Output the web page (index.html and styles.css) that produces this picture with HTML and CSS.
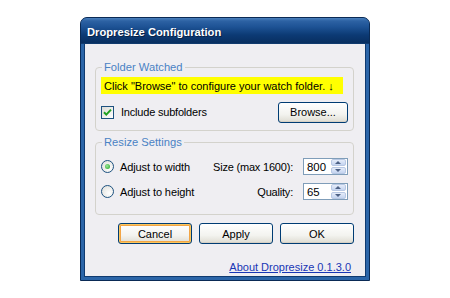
FILE: index.html
```html
<!DOCTYPE html>
<html>
<head>
<meta charset="utf-8">
<link rel="stylesheet" href="styles.css">
</head>
<body>
<div class="window">
  <div class="titlebar">Dropresize Configuration</div>
  <div class="client">
    <fieldset class="group g1">
      <legend>Folder Watched</legend>
      <div class="notice">Click "Browse" to configure your watch folder. ↓</div>
      <div class="row row-check">
        <span class="check"><svg width="9" height="9" viewBox="0 0 9 9"><path d="M1 4.2 L3.3 6.6 L8 1.6" fill="none" stroke="#21a121" stroke-width="2"/></svg></span>
        <span class="label">Include subfolders</span>
        <span class="btn browse">Browse...</span>
      </div>
    </fieldset>
    <fieldset class="group g2">
      <legend>Resize Settings</legend>
      <div class="row row-radio">
        <span class="radio on"><span class="dot"></span></span>
        <span class="label">Adjust to width</span>
        <span class="field-label">Size (max 1600):</span>
        <span class="spin"><span class="val">800</span><span class="arrows"><span class="ar up"></span><span class="ar down"></span></span></span>
      </div>
      <div class="row row-radio">
        <span class="radio"></span>
        <span class="label">Adjust to height</span>
        <span class="field-label">Quality:</span>
        <span class="spin"><span class="val">65</span><span class="arrows"><span class="ar up"></span><span class="ar down"></span></span></span>
      </div>
    </fieldset>
    <div class="buttons">
      <span class="btn hot">Cancel</span>
      <span class="btn">Apply</span>
      <span class="btn">OK</span>
    </div>
    <div class="linkrow"><a class="about" href="#">About Dropresize 0.1.3.0</a></div>
  </div>
</div>
</body>
</html>
```
FILE: styles.css
```css
html, body {
  margin: 0;
  padding: 0;
  background: #ffffff;
}
body {
  font-family: "Liberation Sans", Arial, sans-serif;
  font-size: 11px;
  color: #000;
}
.window {
  margin: 17px 0 0 80px;
  width: 290px;
  height: 264px;
  box-sizing: border-box;
  border: 1px solid #0a2a55;
  border-radius: 7px 7px 0 0;
  background: #2b65a8;
  display: flex;
  flex-direction: column;
  overflow: hidden;
}
.titlebar {
  height: 26px;
  flex: none;
  box-sizing: border-box;
  padding: 8px 0 0 6px;
  color: #fff;
  font-weight: bold;
  font-size: 11.2px;
  background: linear-gradient(#4a80bd 0px, #2d62a3 3px, #1d5294 9px, #0c3a74 17px, #082d5e 26px);
  text-shadow: 1px 1px 0 #0a2246;
  border-bottom: 1px solid #103a6e;
  border-radius: 6px 6px 0 0;
}
.client {
  flex: 1;
  margin: 0 3px 3px;
  border: 1px solid #0f3a70;
  border-top: none;
  background: #efeef2;
  padding: 16px 11px 0 10px;
  display: flex;
  flex-direction: column;
}
.group {
  margin: 0;
  border: 1px solid #d3d2cc;
  border-radius: 4px;
  padding: 0 5px 0 5px;
  min-width: 0;
}
.group legend {
  color: #4a82c4;
  font-size: 11.2px;
  line-height: 14px;
  padding: 0 2px;
  margin-left: 1px;
}
.g1 {
  height: 71px;
  box-sizing: border-box;
  padding-top: 3px;
}
.notice {
  width: 242px;
  height: 17px;
  box-sizing: border-box;
  background: #ffff00;
  padding: 2px 0 0 3px;
  font-size: 11px;
  line-height: 14px;
  white-space: nowrap;
}
.row {
  display: flex;
  align-items: center;
}
.row-check {
  margin-top: 8px;
  height: 20px;
}
.check {
  width: 11px;
  height: 11px;
  border: 1px solid #1c5180;
  background: linear-gradient(135deg, #dcdcd7, #fff);
  display: flex;
  align-items: center;
  justify-content: center;
}
.row-check .label {
  margin-left: 7px;
  font-size: 11px;
  letter-spacing: -0.2px;
}
.btn {
  box-sizing: border-box;
  height: 21px;
  border: 1px solid #003c74;
  border-radius: 3px;
  background: linear-gradient(#ffffff, #f3f3ef 60%, #dedcd2);
  display: flex;
  align-items: center;
  justify-content: center;
  font-size: 11px;
  box-shadow: inset 0 -1px 0 #d6d0c5;
}
.browse {
  margin-left: auto;
  width: 70px;
}
.g2 {
  margin-top: 4px;
  height: 80px;
  box-sizing: border-box;
  padding-top: 9px;
}
.row-radio {
  height: 17px;
  margin-bottom: 8px;
}
.radio {
  width: 13px;
  height: 13px;
  box-sizing: border-box;
  border: 1px solid #1c5180;
  border-radius: 50%;
  background: radial-gradient(circle at 65% 65%, #ffffff, #dcdcd7);
  display: flex;
  align-items: center;
  justify-content: center;
}
.radio .dot {
  width: 5px;
  height: 5px;
  border-radius: 50%;
  background: radial-gradient(circle at 40% 40%, #9be89b, #21a121);
}
.row-radio .label {
  margin-left: 6px;
  flex: 1;
  font-size: 11px;
  letter-spacing: -0.1px;
}
.field-label {
  text-align: right;
  margin-right: 10px;
  font-size: 11px;
  letter-spacing: -0.2px;
  white-space: nowrap;
}
.spin {
  width: 45px;
  height: 17px;
  box-sizing: border-box;
  border: 1px solid #7f9db9;
  background: #fff;
  display: flex;
  align-items: center;
  justify-content: space-between;
}
.spin .val {
  padding-left: 3px;
  font-size: 11.4px;
}
.arrows {
  width: 15px;
  height: 15px;
  display: flex;
  flex-direction: column;
  gap: 1px;
  margin-right: 1px;
}
.ar {
  flex: 1;
  border: 1px solid #b8c8e4;
  border-radius: 2px;
  background: linear-gradient(#e5ecf9, #c4d4f0);
  position: relative;
}
.ar::after {
  content: "";
  position: absolute;
  left: 3px;
  top: 1px;
  border-left: 3.5px solid transparent;
  border-right: 3.5px solid transparent;
}
.ar.up::after {
  border-bottom: 3px solid #4d6185;
}
.ar.down::after {
  border-top: 3px solid #4d6185;
}
.buttons {
  margin-top: 8px;
  display: flex;
  justify-content: flex-end;
  gap: 7px;
}
.buttons .btn {
  width: 74px;
}
.btn.hot {
  box-shadow: inset 0 0 0 1px #fcc65e, inset 0 0 0 2px #f2a545;
}
.linkrow {
  margin-top: 17px;
  display: flex;
  justify-content: flex-end;
  padding-right: 3px;
}
.about {
  color: #1836b5;
  text-decoration: underline;
  font-size: 11px;
}
```
